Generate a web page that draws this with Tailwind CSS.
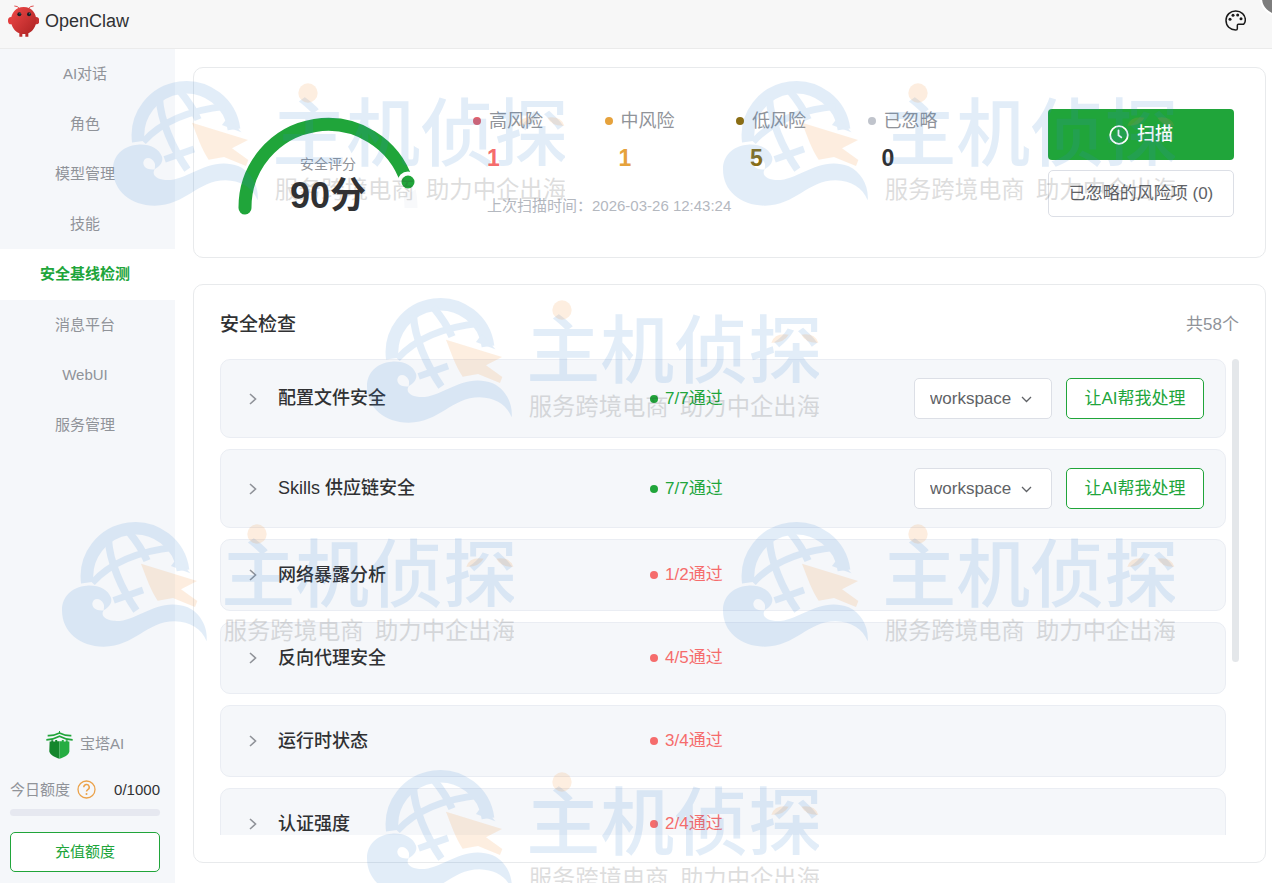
<!DOCTYPE html>
<html lang="zh-CN">
<head>
  <meta charset="UTF-8">
  <meta name="viewport" content="width=device-width, initial-scale=1.0">
  <title>OpenClaw</title>
  <script src="https://cdn.jsdelivr.net/npm/@tailwindcss/browser@4"></script>
</head>
<body class="relative flex h-screen flex-col overflow-hidden bg-white font-['Liberation_Sans','Noto_Sans_CJK_SC',sans-serif] text-[#303133]">

  <!-- 顶部栏 -->
  <header class="relative flex h-[49px] shrink-0 items-center justify-between border-b border-[#ebebeb] bg-[#f7f7f7] pl-2 pr-[26px]">
    <div class="flex items-center gap-[6px] pb-[7px]">
      <svg class="h-8 w-[31px]" viewBox="23 10 93 96" aria-hidden="true">
        <defs>
          <linearGradient id="crab" x1="0" y1="0" x2="1" y2="1">
            <stop offset="0" stop-color="#f04848"/>
            <stop offset="1" stop-color="#a82020"/>
          </linearGradient>
        </defs>
        <path d="M42 13Q53 12 58 22M100 13Q89 12 84 22" fill="none" stroke="#e05050" stroke-width="3"/>
        <ellipse cx="32" cy="57" rx="9" ry="11" fill="#e23c3c"/>
        <ellipse cx="108" cy="57" rx="9" ry="11" fill="#c53030"/>
        <path d="M70 16C94 16 108 35 108 55C108 75 96 90 84 95V105H75V97H66V105H57V95C44 90 32 75 32 55C32 35 46 16 70 16Z" fill="url(#crab)"/>
        <circle cx="57" cy="38" r="6" fill="#1c1f26"/>
        <circle cx="86" cy="38" r="6" fill="#1c1f26"/>
        <circle cx="59" cy="36" r="2" fill="#2f7f86"/>
        <circle cx="88" cy="36" r="2" fill="#2f7f86"/>
      </svg>
      <span class="text-[18px] leading-6">OpenClaw</span>
    </div>
    <button type="button" aria-label="主题" class="mb-[7px]">
      <svg class="size-[21px]" viewBox="29 31 63 63" fill="none" stroke="#1a1a1a" stroke-width="4.5" stroke-linejoin="round">
        <path d="M61 91C44 91 32 79 32 62C32 46 45 34 61 34C78 34 90 46 90 60C90 66 88 71 85 74H69C67 74 66 75 66 77V87C66 90 64 91 61 91Z"/>
        <g fill="#1a1a1a" stroke="none">
          <circle cx="44" cy="59" r="4.5"/><circle cx="53" cy="47" r="4.5"/><circle cx="67" cy="46" r="4.5"/><circle cx="77" cy="57" r="4.5"/>
        </g>
      </svg>
    </button>
    <span class="absolute -right-6 -top-5 size-9 rounded-full border-2 border-white bg-[#7d7d7d]"></span>
  </header>

  <div class="flex min-h-0 flex-1">
    <!-- 侧边栏 -->
    <aside class="flex w-[175px] shrink-0 flex-col bg-[#f5f7fa] text-[15px]">
      <nav class="flex flex-col text-center leading-[50px] text-[#909399]">
        <a href="#" class="h-[50px] pr-[5px]">AI对话</a>
        <a href="#" class="h-[50px] pr-[5px]">角色</a>
        <a href="#" class="h-[50px] pr-[5px]">模型管理</a>
        <a href="#" class="h-[50px] pr-[5px]">技能</a>
        <a href="#" class="h-[51px] bg-white pr-[5px] font-bold text-[#20a53a]">安全基线检测</a>
        <a href="#" class="h-[50px] pr-[5px]">消息平台</a>
        <a href="#" class="h-[50px] pr-[5px]">WebUI</a>
        <a href="#" class="h-[50px] pr-[5px]">服务管理</a>
      </nav>

      <div class="mt-auto flex flex-col pb-[11px] pl-[10px] pr-[15px]">
        <div class="flex items-center justify-center gap-[7px] text-[#909399]">
          <svg class="h-7 w-[27px]" viewBox="137 47 82 85" aria-hidden="true">
            <path d="M148 79H153V75H159V79H165V74H171V78H178V131C164 127 150 120 147 109Z" fill="#14862c"/>
            <path d="M178 78H185V74H191V79H197V75H203V79H208V109C206 120 192 127 178 131Z" fill="#25ad42"/>
            <g fill="none" stroke="#20a53a" stroke-width="5">
              <path d="M142 61Q160 62 178 53Q196 62 214 61"/>
              <path d="M138 74Q160 73 178 63Q196 73 218 74"/>
              <path d="M178 47V56" stroke-width="3"/>
            </g>
          </svg>
          <span>宝塔AI</span>
        </div>
        <div class="mt-[20px] flex items-center justify-between whitespace-nowrap">
          <span class="flex items-center gap-[7px] text-[#909399]">今日额度
            <svg class="size-[19px]" viewBox="0 0 19 19" aria-hidden="true">
              <circle cx="9.5" cy="9.5" r="8.5" fill="none" stroke="#eba24a" stroke-width="1.3"/>
              <path d="M6.8 7.3A2.7 2.7 0 1 1 10.8 9.6Q9.5 10.4 9.5 11.6" fill="none" stroke="#eba24a" stroke-width="1.5"/>
              <circle cx="9.5" cy="13.9" r="1" fill="#eba24a"/>
            </svg>
          </span>
          <span>0/1000</span>
        </div>
        <div class="mt-2 h-[7px] rounded-full bg-[#e6e8f0]"></div>
        <button type="button" class="mt-4 h-10 rounded-[5px] border border-[#20a53a] bg-white text-[#20a53a]">充值额度</button>
      </div>
    </aside>

    <main class="flex min-w-0 flex-1 flex-col gap-[26px] pb-5 pl-[18px] pr-[6px] pt-[18px]">
      <!-- 安全评分 -->
      <section class="flex h-[191px] shrink-0 rounded-[10px] border border-[#e8eaec] bg-white pl-[43px] pr-[31px] pt-[41px]">
        <svg class="h-[108px] w-[182px] shrink-0" viewBox="0 0 182 108" role="img" aria-label="安全评分 90分">
          <path d="M174 99A83 83 0 0 0 170 73" fill="none" stroke="#f8f9fb" stroke-width="13"/>
          <path d="M8 99A83 83 0 0 1 170 73" fill="none" stroke="#20a53a" stroke-width="13" stroke-linecap="round"/>
          <circle cx="171" cy="73" r="8.5" fill="#20a53a" stroke="#fff" stroke-width="4"/>
          <text x="91" y="60" text-anchor="middle" class="fill-[#909399] text-[14px]">安全评分</text>
          <text x="91" y="99" text-anchor="middle" class="fill-[#303133] text-[36px] font-bold">90分</text>
        </svg>

        <div class="ml-[54px] flex-1">
          <dl class="grid max-w-[526px] grid-cols-4">
            <div>
              <dt class="flex items-center gap-2 text-[18px] leading-6 text-[#909399]"><i class="size-2 rounded-full bg-[#e25f6a]"></i>高风险</dt>
              <dd class="mt-[11px] pl-[14px] text-[23px] font-bold leading-7 text-[#f56c6c]">1</dd>
            </div>
            <div>
              <dt class="flex items-center gap-2 text-[18px] leading-6 text-[#909399]"><i class="size-2 rounded-full bg-[#e6a23c]"></i>中风险</dt>
              <dd class="mt-[11px] pl-[14px] text-[23px] font-bold leading-7 text-[#e6a23c]">1</dd>
            </div>
            <div>
              <dt class="flex items-center gap-2 text-[18px] leading-6 text-[#909399]"><i class="size-2 rounded-full bg-[#8a6d14]"></i>低风险</dt>
              <dd class="mt-[11px] pl-[14px] text-[23px] font-bold leading-7 text-[#8a6d14]">5</dd>
            </div>
            <div>
              <dt class="flex items-center gap-2 text-[18px] leading-6 text-[#909399]"><i class="size-2 rounded-full bg-[#c0c4cc]"></i>已忽略</dt>
              <dd class="mt-[11px] pl-[14px] text-[23px] font-bold leading-7 text-[#303133]">0</dd>
            </div>
          </dl>
          <p class="mt-[22px] pl-[14px] text-[15px] leading-6 text-[#b4b8bf]">上次扫描时间：2026-03-26 12:43:24</p>
        </div>

        <div class="flex w-[186px] shrink-0 flex-col gap-[10px]">
          <button type="button" class="flex h-[51px] items-center justify-center gap-2 rounded-[4px] bg-[#20a53a] text-[18px] font-medium text-white">
            <svg class="size-[20px]" viewBox="0 0 20 20" fill="none" stroke="currentColor" stroke-width="1.8" stroke-linecap="round" aria-hidden="true">
              <circle cx="10" cy="10" r="8.8"/><path d="M9.5 5.3V10.2L12.3 12.4"/>
            </svg>扫描
          </button>
          <button type="button" class="h-[47px] rounded-[5px] border border-[#dcdfe6] bg-white text-[17px] text-[#606266]">已忽略的风险项 (0)</button>
        </div>
      </section>

      <!-- 安全检查 -->
      <section class="flex min-h-0 flex-1 flex-col rounded-[10px] border border-[#e8eaec] bg-white px-[26px] pb-[27px] pt-[26px]">
        <div class="flex items-center justify-between leading-7">
          <h2 class="text-[19px] font-medium">安全检查</h2>
          <span class="text-[17px] text-[#909399]">共58个</span>
        </div>
        <div class="mt-5 flex min-h-0 flex-1 gap-[6px]">
          <ul id="check-list" class="flex min-w-0 flex-1 flex-col gap-[11px] overflow-hidden"></ul>
          <div class="h-[303px] w-[7px] rounded-full bg-[#e4e7ea]"></div>
        </div>
      </section>
    </main>
  </div>

  <!-- 水印 -->
  <svg class="hidden">
    <symbol id="watermark" viewBox="7 4 1356 384">
      <g opacity=".14">
        <g fill="none" stroke="#3784d4" stroke-width="38">
          <path d="M83 192A144 144 0 1 1 370 155"/>
          <path d="M98 192C150 135 225 98 345 86" stroke-width="20"/>
          <path d="M146 62C150 130 185 210 230 276" stroke-width="22"/>
          <path d="M206 38Q245 85 262 126" stroke-width="22"/>
          <path d="M162 245L250 214" stroke-width="20"/>
        </g>
        <path d="M334 142L352 118L392 164Z" fill="#3784d4"/>
        <path d="M132 275C112 278 97 269 98 254C101 236 123 236 132 256C134 262 133 267 132 275C150 264 158 252 154 237C145 213 118 199 82 201C35 204 7 235 7 275C7 340 60 384 132 384C225 384 260 308 345 308C393 310 425 329 441 368C445 326 422 283 384 266C300 232 235 307 171 307C144 307 120 295 132 275Z" fill="#3784d4"/>
        <text x="485" y="248" font-size="222" font-weight="500" fill="#3784d4">主机侦探</text>
      </g>
      <g fill="#f28e30" opacity=".15">
        <path d="M244 135L412 187L364 212L413 247L406 265L340 238L294 246C272 213 260 176 244 135Z"/>
        <circle cx="592" cy="46" r="29"/>
        <path d="M1220 144Q1230 114 1272 120Q1256 146 1220 144ZM1310 120Q1350 114 1361 144Q1324 146 1310 120Z"/>
      </g>
      <g fill="#303133" opacity=".16" font-size="70">
        <text x="492" y="361">服务跨境电商</text>
        <text x="946" y="361">助力中企出海</text>
      </g>
    </symbol>
  </svg>
  <div class="pointer-events-none absolute inset-0 overflow-hidden" aria-hidden="true">
    <svg class="absolute left-[113px] top-[79px] h-32 w-[452px]"><use href="#watermark"/></svg>
    <svg class="absolute left-[723px] top-[79px] h-32 w-[452px]"><use href="#watermark"/></svg>
    <svg class="absolute left-[367px] top-[296px] h-32 w-[452px]"><use href="#watermark"/></svg>
    <svg class="absolute left-[62px] top-[520px] h-32 w-[452px]"><use href="#watermark"/></svg>
    <svg class="absolute left-[723px] top-[520px] h-32 w-[452px]"><use href="#watermark"/></svg>
    <svg class="absolute left-[367px] top-[768px] h-32 w-[452px]"><use href="#watermark"/></svg>
  </div>

<script>
  const checks = [
    { name: '配置文件安全', passed: 7, total: 7, fixable: true },
    { name: 'Skills 供应链安全', passed: 7, total: 7, fixable: true },
    { name: '网络暴露分析', passed: 1, total: 2 },
    { name: '反向代理安全', passed: 4, total: 5 },
    { name: '运行时状态', passed: 3, total: 4 },
    { name: '认证强度', passed: 2, total: 4 }
  ];

  // 渲染检查列表
  const list = document.getElementById('check-list');
  checks.forEach(item => {
    const ok = item.passed === item.total;
    const row = document.createElement('li');
    row.className = (item.fixable ? 'h-[79px]' : 'h-[72px]') +
      ' grid shrink-0 grid-cols-[42%_1fr_auto] items-center rounded-[10px] border border-[#eaedf3] bg-[#f5f7fa] pl-7 pr-[21px]';
    row.innerHTML = `
      <button type="button" class="flex items-center gap-[21px] text-left text-[18px] font-medium">
        <svg class="h-3 w-2" viewBox="0 0 8 12" fill="none" stroke="#909399" stroke-width="1.6"><path d="M1 1L6.5 6L1 11"/></svg>
        ${item.name}
      </button>
      <span class="${ok ? 'text-[#20a53a]' : 'text-[#f56c6c]'} flex items-center gap-[7px] text-[17px]">
        <i class="size-2 rounded-full bg-current"></i>${item.passed}/${item.total}通过
      </span>
      ${item.fixable ? `
      <div class="flex gap-[14px] text-[17px]">
        <div class="relative">
          <select aria-label="${item.name}" class="h-[41px] w-[138px] appearance-none rounded-[5px] border border-[#dcdfe6] bg-white pl-[15px] leading-7 text-[#606266]">
            <option>workspace</option>
          </select>
          <svg class="pointer-events-none absolute right-5 top-[18px] h-[7px] w-[11px]" viewBox="0 0 11 7" fill="none" stroke="#606266" stroke-width="1.3"><path d="M1 1L5.5 5.5L10 1"/></svg>
        </div>
        <button type="button" class="h-[41px] w-[138px] rounded-[5px] border border-[#20a53a] bg-white text-[#20a53a]">让AI帮我处理</button>
      </div>` : ''}
    `;
    list.appendChild(row);
  });
</script>
</body>
</html>
